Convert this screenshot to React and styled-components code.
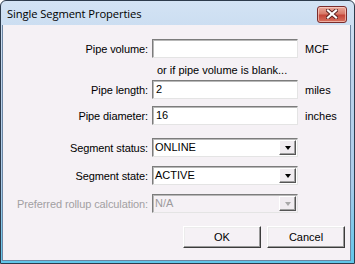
import React from 'react'
import styled, { createGlobalStyle } from 'styled-components'

const GlobalStyle = createGlobalStyle`
  html, body {
    margin: 0;
    padding: 0;
    background: #ffffff;
  }
  body {
    width: 355px;
    height: 264px;
    overflow: hidden;
  }
`

const Window = styled.div`
  box-sizing: border-box;
  width: 355px;
  height: 264px;
  display: flex;
  flex-direction: column;
  border: 1px solid #2d3b4c;
  border-radius: 6px 6px 0 0;
  background: linear-gradient(#d3e3f4, #bcd3eb 30%, #a9cbe9 70%, #5fc6ea);
  padding: 0 3px 2px 1px;
`

const TitleBar = styled.div`
  height: 24px;
  flex: none;
  display: flex;
  align-items: center;
  justify-content: space-between;
  padding: 0 4px 0 5px;
`

const Title = styled.span`
  font-family: 'Open Sans', 'Noto Sans', sans-serif;
  font-size: 11.2px;
  color: #000000;
  letter-spacing: -0.1px;
`

const CloseButton = styled.div`
  box-sizing: border-box;
  width: 30px;
  height: 17px;
  margin-top: 2px;
  border: 1px solid #7a2c2c;
  border-radius: 3px;
  background: linear-gradient(#e9a99b, #d87a6a 45%, #c4463a 55%, #d7715f);
  box-shadow: inset 0 0 0 1px rgba(255, 220, 210, 0.6);
  display: flex;
  align-items: center;
  justify-content: center;
`

const Client = styled.div`
  flex: 1;
  background: #f5f1f5;
  border-left: 1px solid #6d86a3;
  border-right: 1px solid #6d86a3;
  border-bottom: 1px solid #6d86a3;
  display: flex;
  flex-direction: column;
  padding-top: 14px;
  font-family: 'Liberation Sans', Arial, sans-serif;
  font-size: 11px;
  color: #000000;
`

const Row = styled.div`
  display: grid;
  grid-template-columns: 149px 146px auto;
  align-items: center;
  margin-top: ${p => p.$top || 0}px;
`

const Label = styled.div`
  text-align: right;
  padding-right: 4px;
  letter-spacing: -0.1px;
  color: ${p => (p.$disabled ? '#a2a0a2' : '#000000')};
  white-space: nowrap;
`

const Unit = styled.div`
  padding-left: 7px;
`

const Hint = styled.div`
  grid-column: 2 / 4;
  padding-left: 5px;
  height: 13px;
  line-height: 13px;
`

const TextBox = styled.div`
  box-sizing: border-box;
  height: 19px;
  background: #ffffff;
  border-top: 1px solid #7c7c7c;
  border-left: 1px solid #7c7c7c;
  border-right: 1px solid #e4e4e4;
  border-bottom: 1px solid #e4e4e4;
  box-shadow: inset 1px 1px 0 #b8b8b8;
  padding-left: 3px;
  line-height: 17px;
`

const Combo = styled.div`
  box-sizing: border-box;
  height: 19px;
  display: flex;
  align-items: stretch;
  background: ${p => (p.$disabled ? '#f5f1f5' : '#ffffff')};
  color: ${p => (p.$disabled ? '#9c9a9c' : '#000000')};
  border-top: 1px solid #7c7c7c;
  border-left: 1px solid #7c7c7c;
  border-right: 1px solid #e4e4e4;
  border-bottom: 1px solid #e4e4e4;
  box-shadow: inset 1px 1px 0 #b8b8b8;
`

const ComboText = styled.div`
  flex: 1;
  padding-left: 2px;
  line-height: 17px;
`

const DropButton = styled.div`
  box-sizing: border-box;
  width: 17px;
  margin: 1px 1px 1px 0;
  background: #f0ecf0;
  border-top: 1px solid #ffffff;
  border-left: 1px solid #ffffff;
  border-right: 1px solid #555555;
  border-bottom: 1px solid #555555;
  box-shadow: inset -1px -1px 0 #a0a0a0;
  display: flex;
  align-items: center;
  justify-content: center;
`

const Arrow = styled.div`
  width: 0;
  height: 0;
  border-left: 3.5px solid transparent;
  border-right: 3.5px solid transparent;
  border-top: 4px solid ${p => (p.$disabled ? '#a8a8a8' : '#000000')};
  margin-top: 1px;
`

const Buttons = styled.div`
  display: flex;
  justify-content: flex-end;
  gap: 6px;
  margin-top: 13px;
  padding-right: 5px;
`

const Button = styled.div`
  box-sizing: border-box;
  width: 78px;
  height: 22px;
  background: #f5f1f5;
  border-top: 1px solid #ffffff;
  border-left: 1px solid #ffffff;
  border-right: 1px solid #3c3c3c;
  border-bottom: 1px solid #3c3c3c;
  box-shadow: inset -1px -1px 0 #9a9a9a, inset 1px 1px 0 #ececec;
  display: flex;
  align-items: center;
  justify-content: center;
`

const CloseIcon = () => (
  <svg width="12" height="10" viewBox="0 0 12 10">
    <path d="M2 1.5 L10 8.5 M10 1.5 L2 8.5" stroke="#5a2020" strokeWidth="4" strokeLinecap="square" />
    <path d="M2 1.5 L10 8.5 M10 1.5 L2 8.5" stroke="#ffffff" strokeWidth="2.2" strokeLinecap="square" />
  </svg>
)

const Select = ({ value, disabled }) => (
  <Combo $disabled={disabled}>
    <ComboText>{value}</ComboText>
    <DropButton>
      <Arrow $disabled={disabled} />
    </DropButton>
  </Combo>
)

export default function App() {
  return (
    <>
      <GlobalStyle />
      <Window>
        <TitleBar>
          <Title>Single Segment Properties</Title>
          <CloseButton>
            <CloseIcon />
          </CloseButton>
        </TitleBar>
        <Client>
          <Row>
            <Label>Pipe volume:</Label>
            <TextBox />
            <Unit>MCF</Unit>
          </Row>
          <Row $top={6}>
            <div />
            <Hint>or if pipe volume is blank...</Hint>
          </Row>
          <Row $top={3}>
            <Label>Pipe length:</Label>
            <TextBox>2</TextBox>
            <Unit>miles</Unit>
          </Row>
          <Row $top={7}>
            <Label>Pipe diameter:</Label>
            <TextBox>16</TextBox>
            <Unit>inches</Unit>
          </Row>
          <Row $top={13}>
            <Label>Segment status:</Label>
            <Select value="ONLINE" />
          </Row>
          <Row $top={9}>
            <Label>Segment state:</Label>
            <Select value="ACTIVE" />
          </Row>
          <Row $top={9}>
            <Label $disabled>Preferred rollup calculation:</Label>
            <Select value="N/A" disabled />
          </Row>
          <Buttons>
            <Button>OK</Button>
            <Button>Cancel</Button>
          </Buttons>
        </Client>
      </Window>
    </>
  )
}
